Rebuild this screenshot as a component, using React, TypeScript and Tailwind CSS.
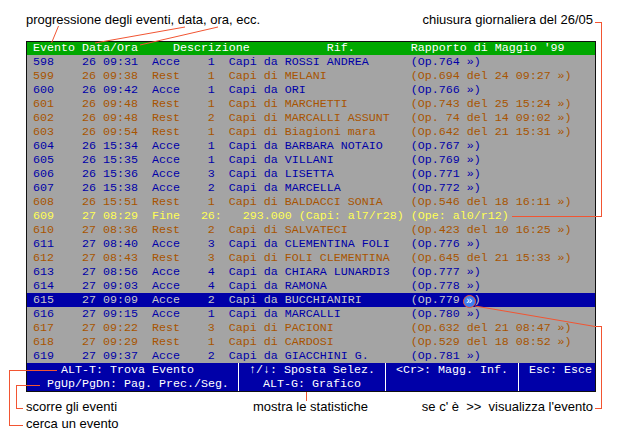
import React from "react";

type Row = { text: string; kind: "acce" | "rest" | "fine"; selected?: boolean };

const pad = (s: string, n: number) => (s + " ".repeat(n)).slice(0, n);

const row = (num: string, date: string, type: string, count: string, desc: string, ref: string) =>
  pad(num, 7) + pad(date, 10) + pad(type, 8) + count + "  " + pad(desc, 26) + ref;

const rows: Row[] = [
  { text: row("598", "26 09:31", "Acce", "1", "Capi da ROSSI ANDREA", "(Op.764 »)"), kind: "acce" },
  { text: row("599", "26 09:38", "Rest", "1", "Capi di MELANI", "(Op.694 del 24 09:27 »)"), kind: "rest" },
  { text: row("600", "26 09:42", "Acce", "1", "Capi da ORI", "(Op.766 »)"), kind: "acce" },
  { text: row("601", "26 09:48", "Rest", "1", "Capi di MARCHETTI", "(Op.743 del 25 15:24 »)"), kind: "rest" },
  { text: row("602", "26 09:48", "Rest", "2", "Capi di MARCALLI ASSUNT", "(Op. 74 del 14 09:02 »)"), kind: "rest" },
  { text: row("603", "26 09:54", "Rest", "1", "Capi di Biagioni mara", "(Op.642 del 21 15:31 »)"), kind: "rest" },
  { text: row("604", "26 15:34", "Acce", "1", "Capi da BARBARA NOTAIO", "(Op.767 »)"), kind: "acce" },
  { text: row("605", "26 15:35", "Acce", "1", "Capi da VILLANI", "(Op.769 »)"), kind: "acce" },
  { text: row("606", "26 15:36", "Acce", "3", "Capi da LISETTA", "(Op.771 »)"), kind: "acce" },
  { text: row("607", "26 15:38", "Acce", "2", "Capi da MARCELLA", "(Op.772 »)"), kind: "acce" },
  { text: row("608", "26 15:51", "Rest", "1", "Capi di BALDACCI SONIA", "(Op.546 del 18 16:11 »)"), kind: "rest" },
  { text: "609    27 08:29  Fine   26:   293.000 (Capi: al7/r28) (Ope: al0/r12)", kind: "fine" },
  { text: row("610", "27 08:36", "Rest", "2", "Capi di SALVATECI", "(Op.423 del 10 16:25 »)"), kind: "rest" },
  { text: row("611", "27 08:40", "Acce", "3", "Capi da CLEMENTINA FOLI", "(Op.776 »)"), kind: "acce" },
  { text: row("612", "27 08:43", "Rest", "3", "Capi di FOLI CLEMENTINA", "(Op.645 del 21 15:33 »)"), kind: "rest" },
  { text: row("613", "27 08:56", "Acce", "4", "Capi da CHIARA LUNARDI3", "(Op.777 »)"), kind: "acce" },
  { text: row("614", "27 09:03", "Acce", "4", "Capi da RAMONA", "(Op.778 »)"), kind: "acce" },
  { text: row("615", "27 09:09", "Acce", "2", "Capi da BUCCHIANIRI", "(Op.779 "), kind: "acce", selected: true },
  { text: row("616", "27 09:15", "Acce", "1", "Capi da MARCALLI", "(Op.780 »)"), kind: "acce" },
  { text: row("617", "27 09:22", "Rest", "3", "Capi di PACIONI", "(Op.632 del 21 08:47 »)"), kind: "rest" },
  { text: row("618", "27 09:29", "Rest", "1", "Capi di CARDOSI", "(Op.529 del 18 08:52 »)"), kind: "rest" },
  { text: row("619", "27 09:37", "Acce", "2", "Capi da GIACCHINI G.", "(Op.781 »)"), kind: "acce" },
];

const header = "Evento Data/Ora     Descrizione           Rif.        Rapporto di Maggio '99";

function rowClass(r: Row) {
  if (r.selected) return "bg-[#0000a8] text-[#c8c8c8]";
  if (r.kind === "rest") return "text-[#a85400]";
  if (r.kind === "fine") return "text-[#ffff54]";
  return "text-[#0000a8]";
}

// highlighted » of the selected row
function Marker() {
  return (
    <span className="relative inline-block w-[7px]">
      <span className="absolute left-[-4px] top-[2px] w-[13px] h-[13px] rounded-full bg-[#3d7df0] border border-[#f25532] flex items-center justify-center text-white text-[11px] leading-none">
        »
      </span>
      {"\u00a0"}
    </span>
  );
}

function Lines() {
  const red = "#f25532";
  return (
    <svg className="absolute left-0 top-0 pointer-events-none" width={618} height={435}>
      <g stroke={red} strokeWidth={1} fill="none" shapeRendering="crispEdges">
        <line x1={58.5} y1={26} x2={51.5} y2={43} shapeRendering="auto" />
        <line x1={185} y1={27} x2={95} y2={43} shapeRendering="auto" />
        <line x1={218} y1={27} x2={140} y2={45} shapeRendering="auto" />
        <polyline points="595,22.5 601.5,22.5 601.5,216.5 512,216.5" />
        <polyline points="475,306 595,326.5" shapeRendering="auto" />
        <polyline points="595,326.5 601.5,326.5 601.5,408.5 595,408.5" />
        <polyline points="40,385.5 16.5,385.5 16.5,408.5 23,408.5" />
        <polyline points="57,370.5 9.5,370.5 9.5,425.5 23,425.5" />
        <polyline points="306.5,392 306.5,401" />
      </g>
    </svg>
  );
}

export default function App() {
  return (
    <div className="relative w-[618px] h-[435px] bg-white overflow-hidden font-['Liberation_Sans',Arial,sans-serif] text-[13px] leading-[15px] text-black">
      <div className="flex justify-between pl-[26px] pr-[25px] pt-[12px] h-[41px]">
        <span>progressione degli eventi, data, ora, ecc.</span>
        <span>chiusura giornaliera del 26/05</span>
      </div>

      <div className="ml-[26px] w-[570px] border border-[#101010] bg-[#a4a4a4] font-['Liberation_Mono','Courier_New',monospace] text-[11.67px]">
        <div className="h-[13px] leading-[13px] bg-[#00a800] text-white whitespace-pre pl-[6px]">{header}</div>
        {rows.map((r, i) => (
          <div key={i} className={"h-[14px] leading-[14px] whitespace-pre pl-[6px] " + rowClass(r)}>
            {r.text}
            {r.selected && (
              <>
                <Marker />
                <span>)</span>
              </>
            )}
          </div>
        ))}
        <div className="flex h-[28px] bg-[#0000a8] text-white leading-[14px] whitespace-pre">
          <div className="w-[212px] border-r border-white">
            <div className="pl-[34px]">ALT-T: Trova Evento</div>
            <div className="pl-[20px]">PgUp/PgDn: Pag. Prec./Seg.</div>
          </div>
          <div className="w-[147px] border-r border-white">
            <div className="pl-[10px]">↑/↓: Sposta Selez.</div>
            <div className="pl-[24px]">ALT-G: Grafico</div>
          </div>
          <div className="w-[133px] border-r border-white">
            <div className="pl-[10px]">&lt;Cr&gt;: Magg. Inf.</div>
          </div>
          <div className="flex-1">
            <div className="pl-[10px]">Esc: Esce</div>
          </div>
        </div>
      </div>

      <div className="flex pt-[7px] pr-[25px]">
        <div className="w-[253px] pl-[26px] flex flex-col gap-[2px]">
          <span>scorre gli eventi</span>
          <span>cerca un evento</span>
        </div>
        <span>mostra le statistiche</span>
        <span className="ml-auto whitespace-pre">se c' è  &gt;&gt;  visualizza l'evento</span>
      </div>

      <Lines />
    </div>
  );
}
